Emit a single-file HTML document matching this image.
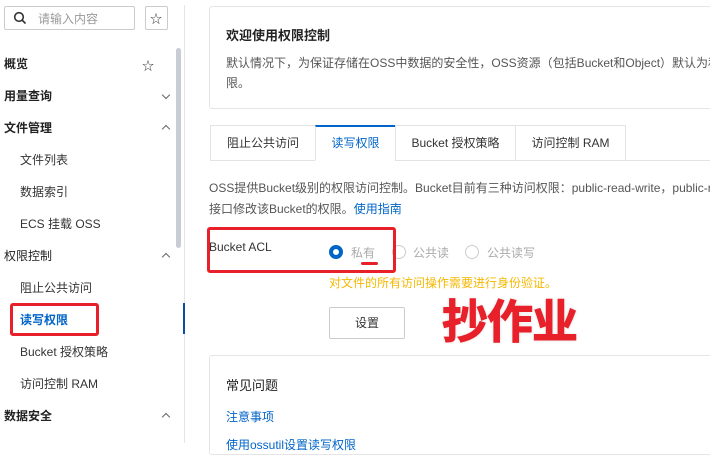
<!DOCTYPE html>
<html><head><meta charset="utf-8"><style>
*{box-sizing:border-box;margin:0;padding:0}
body{width:710px;height:443px;overflow:hidden;background:#fff;font-family:"Liberation Sans","Noto Sans CJK SC",sans-serif;font-size:12px;color:#333;position:relative}
.a{position:absolute;white-space:nowrap}
.side .i{position:absolute;left:20px;font-size:12px;color:#333;line-height:16px}
.side .h{left:4px;font-weight:bold;color:#222}
.chev{position:absolute;left:163px;width:6px;height:6px;border-left:1px solid #666;border-top:1px solid #666}
.dn{transform:rotate(225deg)}
.up{transform:rotate(45deg)}
.tab{position:absolute;top:125px;height:36px;border:1px solid #e3e3e3;line-height:34px;text-align:center;font-size:12px;color:#333;background:#fff}
.radio{position:absolute;width:14px;height:14px;border-radius:50%;border:1px solid #ccc;top:245px}
</style></head><body>
<div class="side">
<div class="a" style="left:4px;top:6px;width:131px;height:24px;border:1px solid #ccc;border-radius:2px"></div>
<svg class="a" style="left:13px;top:11px" width="14" height="14" viewBox="0 0 14 14"><circle cx="6" cy="6" r="4.3" fill="none" stroke="#333" stroke-width="1.6"/><path d="M9 9l3.5 3.5" stroke="#333" stroke-width="1.6"/></svg>
<div class="a" style="left:38px;top:10px;color:#999;font-size:12px">请输入内容</div>
<div class="a" style="left:145px;top:6px;width:23px;height:24px;border:1px solid #ccc;border-radius:2px"></div>
<div class="a" style="left:150px;top:10px;font-size:12px;color:#333">☆</div>
<div class="i h" style="top:56px">概览</div><div class="a" style="left:142px;top:57px;font-size:12px;color:#333">☆</div>
<div class="i h" style="top:88px">用量查询</div><div class="chev dn" style="top:92px"></div>
<div class="i h" style="top:120px">文件管理</div><div class="chev up" style="top:126px"></div>
<div class="i" style="top:152px">文件列表</div>
<div class="i" style="top:184px">数据索引</div>
<div class="i" style="top:216px">ECS 挂载 OSS</div>
<div class="i h" style="top:248px;font-weight:normal">权限控制</div><div class="chev up" style="top:254px"></div>
<div class="i" style="top:280px">阻止公共访问</div>
<div class="i" style="top:312px;color:#0064c8;font-weight:bold">读写权限</div>
<div class="a" style="left:10px;top:303px;width:89px;height:33px;border:3px solid #e8202a;border-radius:3px"></div>
<div class="i" style="top:344px">Bucket 授权策略</div>
<div class="i" style="top:376px">访问控制 RAM</div>
<div class="i h" style="top:408px">数据安全</div><div class="chev up" style="top:414px"></div>
<div class="a" style="left:176px;top:48px;width:5px;height:200px;background:#c8cdd3;border-radius:3px"></div>
<div class="a" style="left:184px;top:5px;width:1px;height:438px;background:#e5e5e5"></div>
<div class="a" style="left:183px;top:303px;width:2px;height:31px;background:#0a4fa0"></div>
</div>

<div class="a" style="left:209px;top:6px;width:520px;height:103px;border:1px solid #e5e5e5;border-radius:3px"></div>
<div class="a" style="left:226px;top:25px;font-size:13px;font-weight:bold;color:#222">欢迎使用权限控制</div>
<div class="a" style="left:226px;top:54px;color:#555">默认情况下，为保证存储在OSS中数据的安全性，OSS资源（包括Bucket和Object）默认为私</div>
<div class="a" style="left:226px;top:74px;color:#555">限。</div>

<div class="a" style="left:395px;top:160px;width:320px;height:1px;background:#e3e3e3"></div>
<div class="tab" style="left:210px;width:106px">阻止公共访问</div>
<div class="tab" style="left:315px;width:81px;border-top:2px solid #0064c8;border-bottom:1px solid #fff;color:#0064c8;line-height:33px">读写权限</div>
<div class="tab" style="left:395px;width:121px">Bucket 授权策略</div>
<div class="tab" style="left:515px;width:111px">访问控制 RAM</div>

<div class="a" style="left:209px;top:179px;color:#555">OSS提供Bucket级别的权限访问控制。Bucket目前有三种访问权限：public-read-write，public-r</div>
<div class="a" style="left:209px;top:200px;color:#555">接口修改该Bucket的权限。<span style="color:#0064c8">使用指南</span></div>

<div class="a" style="left:209px;top:240px;color:#333;font-size:12px">Bucket ACL</div>
<div class="radio" style="left:329px;border:4px solid #0064c8;background:#fff;width:14px;height:14px"></div>
<div class="a" style="left:351px;top:244px;color:#aaa">私有</div>
<div class="radio" style="left:392px"></div><div class="a" style="left:413px;top:244px;color:#aaa">公共读</div>
<div class="radio" style="left:465px"></div><div class="a" style="left:487px;top:244px;color:#aaa">公共读写</div>
<div class="a" style="left:361px;top:262px;width:17px;height:3px;background:#e8202a;border-radius:2px"></div>
<div class="a" style="left:207px;top:227px;width:189px;height:46px;border:3px solid #e8202a;border-radius:3px"></div>
<div class="a" style="left:329px;top:274px;color:#f5b800">对文件的所有访问操作需要进行身份验证。</div>
<div class="a" style="left:329px;top:307px;width:76px;height:32px;border:1px solid #ccc;border-radius:2px;text-align:center;line-height:30px;color:#333">设置</div>
<div class="a" style="left:442px;top:294px;font-size:46px;font-weight:bold;color:#e8202a;line-height:56px;letter-spacing:-1px;-webkit-text-stroke:1px #e8202a;text-shadow:0 0 2px #fff,0 0 3px #ccc">抄作业</div>

<div class="a" style="left:209px;top:355px;width:520px;height:100px;border:1px solid #e5e5e5;border-radius:3px"></div>
<div class="a" style="left:226px;top:375px;font-size:13px;color:#222">常见问题</div>
<div class="a" style="left:226px;top:408px;color:#0064c8">注意事项</div>
<div class="a" style="left:226px;top:436px;color:#0064c8">使用ossutil设置读写权限</div>
</body></html>
